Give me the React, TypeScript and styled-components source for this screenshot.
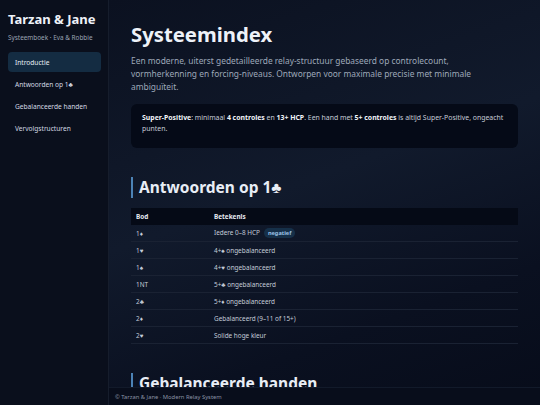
import styled, { createGlobalStyle } from 'styled-components';

const GlobalStyle = createGlobalStyle`
  html, body, #root {
    margin: 0;
    height: 100%;
  }
  body {
    font-family: 'Noto Sans', 'Open Sans', sans-serif;
    background: #0a0f1d;
    color: #e6ebf3;
    overflow: hidden;
  }
`;

const navItems = ['Introductie', 'Antwoorden op 1♣', 'Gebalanceerde handen', 'Vervolgstructuren'];

const rows: { bid: string; meaning: string; badge?: string }[] = [
  { bid: '1♦', meaning: 'Iedere 0–8 HCP', badge: 'negatief' },
  { bid: '1♥', meaning: '4+♠ ongebalanceerd' },
  { bid: '1♠', meaning: '4+♥ ongebalanceerd' },
  { bid: '1NT', meaning: '5+♣ ongebalanceerd' },
  { bid: '2♣', meaning: '5+♦ ongebalanceerd' },
  { bid: '2♦', meaning: 'Gebalanceerd (9–11 of 15+)' },
  { bid: '2♥', meaning: 'Solide hoge kleur' },
];

export default function App() {
  return (
    <>
      <GlobalStyle />
      <Layout>
        <Sidebar>
          <Brand>Tarzan &amp; Jane</Brand>
          <BrandSub>Systeemboek · Eva &amp; Robbie</BrandSub>
          <Nav>
            {navItems.map((item, idx) => (
              <NavItem key={item} $active={idx === 0}>
                {item}
              </NavItem>
            ))}
          </Nav>
        </Sidebar>

        <MainColumn>
          <Content>
            <Title>Systeemindex</Title>
            <Lead>
              Een moderne, uiterst gedetailleerde relay-structuur gebaseerd op controlecount,
              vormherkenning en forcing-niveaus. Ontworpen voor maximale precisie met minimale
              ambiguïteit.
            </Lead>

            <Callout>
              <strong>Super-Positive</strong>: minimaal <strong>4 controles</strong> en{' '}
              <strong>13+ HCP</strong>. Een hand met <strong>5+ controles</strong> is altijd
              Super-Positive, ongeacht punten.
            </Callout>

            <Section>
              <SectionTitle>Antwoorden op 1♣</SectionTitle>
              <Table>
                <thead>
                  <tr>
                    <Th $width='68px'>Bod</Th>
                    <Th>Betekenis</Th>
                  </tr>
                </thead>
                <tbody>
                  {rows.map((row) => (
                    <tr key={row.bid}>
                      <Td>{row.bid}</Td>
                      <Td>
                        {row.meaning}
                        {row.badge && <Badge>{row.badge}</Badge>}
                      </Td>
                    </tr>
                  ))}
                </tbody>
              </Table>
            </Section>

            <Section>
              <SectionTitle>Gebalanceerde handen</SectionTitle>
            </Section>
          </Content>
          <Footer>© Tarzan &amp; Jane · Modern Relay System</Footer>
        </MainColumn>
      </Layout>
    </>
  );
}

const Layout = styled.div`
  display: grid;
  grid-template-columns: 109px 1fr;
  height: 100vh;
`;

const Sidebar = styled.aside`
  background: #0a0f1c;
  border-right: 1px solid #161d2c;
  padding: 11px 7px 0 8px;
  display: flex;
  flex-direction: column;
`;

const Brand = styled.div`
  font-size: 13px;
  font-weight: 700;
  color: #eef2f8;
  line-height: 17px;
`;

const BrandSub = styled.div`
  font-size: 6.4px;
  color: #9aa3b3;
  margin-top: 5px;
  line-height: 9px;
`;

const Nav = styled.nav`
  display: flex;
  flex-direction: column;
  gap: 2px;
  margin-top: 10px;
`;

const NavItem = styled.div<{ $active?: boolean }>`
  height: 20px;
  display: flex;
  align-items: center;
  padding: 0 7px;
  border-radius: 4px;
  font-size: 6.6px;
  white-space: nowrap;
  color: ${(p) => (p.$active ? '#e8eef6' : '#d3d9e3')};
  background: ${(p) => (p.$active ? '#142c42' : 'transparent')};
`;

const MainColumn = styled.main`
  display: flex;
  flex-direction: column;
  min-height: 0;
  background: linear-gradient(160deg, #0b1120 0%, #111a2c 45%, #0a1020 75%, #070c1a 100%);
`;

const Content = styled.div`
  flex: 1;
  min-height: 0;
  overflow: hidden;
  padding: 20px 22px 0 22px;
`;

const Title = styled.h1`
  margin: 0;
  font-size: 20.3px;
  font-weight: 700;
  line-height: 28px;
  color: #eef2f8;
`;

const Lead = styled.p`
  margin: 7px 0 0 0;
  max-width: 345px;
  font-size: 8.4px;
  line-height: 12.8px;
  color: #9ea8b9;
`;

const Callout = styled.div`
  margin-top: 11px;
  background: #050a17;
  border-radius: 6px;
  padding: 8px 11px 14px 11px;
  font-size: 6.9px;
  line-height: 11px;
  color: #c5ccd8;

  strong {
    color: #f1f4f9;
    font-weight: 700;
  }
`;

const Section = styled.section`
  margin-top: 29px;
`;

const SectionTitle = styled.h2`
  margin: 0;
  border-left: 2px solid #4c83b6;
  padding-left: 6px;
  font-size: 15.5px;
  font-weight: 700;
  line-height: 21px;
  color: #e8edf5;
`;

const Table = styled.table`
  width: 100%;
  margin-top: 10px;
  border-collapse: collapse;
  font-size: 6.4px;
`;

const Th = styled.th<{ $width?: string }>`
  width: ${(p) => p.$width ?? 'auto'};
  height: 17px;
  padding: 0 5px;
  text-align: left;
  font-weight: 700;
  color: #e6ebf3;
  background: #050a16;
`;

const Td = styled.td`
  height: 16px;
  padding: 0 5px;
  color: #c4ccd8;
  border-bottom: 1px solid #1a2233;
  vertical-align: middle;
`;

const Badge = styled.span`
  display: inline-block;
  margin-left: 4px;
  padding: 1px 4px;
  border-radius: 6px;
  background: #163049;
  color: #9cc2e6;
  font-size: 5.6px;
  font-weight: 700;
  line-height: 8px;
`;

const Footer = styled.footer`
  height: 17px;
  flex-shrink: 0;
  display: flex;
  align-items: center;
  padding: 0 6px;
  background: #080d1b;
  border-top: 1px solid #121a2a;
  font-size: 5.8px;
  color: #8a93a4;
`;
